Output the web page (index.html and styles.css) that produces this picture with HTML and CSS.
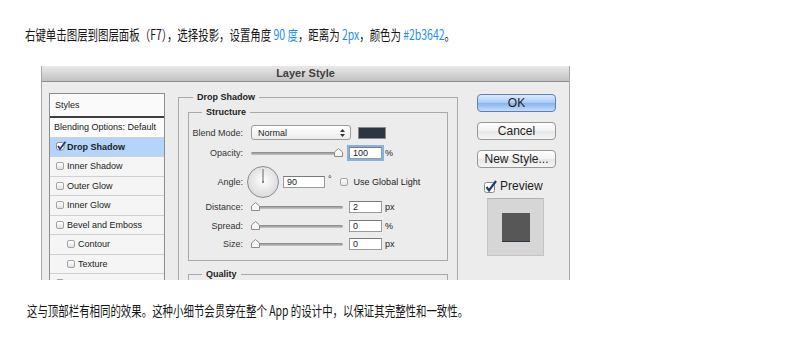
FILE: index.html
```html
<!DOCTYPE html>
<html lang="zh">
  <head>
    <meta charset="utf-8" />
    <title>Layer Style - 投影</title>
    <link rel="stylesheet" href="styles.css">
  </head>
  <body>
    <p class="note note-top">
      <span class="note-text">右键单击图层到图层面板（F7），选择投影，设置角度 <span class="hl">90 度</span>，距离为 <span class="hl">2px</span>，颜色为 <span class="hl">#2b3642</span>。</span>
    </p>

    <div class="dialog">
      <div class="titlebar">Layer Style</div>
      <div class="dialog-body">
        <div class="styles-list">
          <div class="styles-head">Styles</div>
          <div class="style-row">Blending Options: Default</div>
          <div class="style-row selected">
            <svg class="check" width="11" height="10" viewBox="0 0 11 10">
              <rect x="0.5" y="1.5" width="7.5" height="7.5" rx="2" fill="#fff" stroke="#8a8a8a" />
              <path d="M2 5 L4 8 L9.5 0.8" fill="none" stroke="#1d3c80" stroke-width="1.8" />
            </svg>
            <b>Drop Shadow</b>
          </div>
          <div class="style-row"><span class="cb"></span>Inner Shadow</div>
          <div class="style-row"><span class="cb"></span>Outer Glow</div>
          <div class="style-row"><span class="cb"></span>Inner Glow</div>
          <div class="style-row"><span class="cb"></span>Bevel and Emboss</div>
          <div class="style-row sub"><span class="cb"></span>Contour</div>
          <div class="style-row sub"><span class="cb"></span>Texture</div>
          <!-- next row (Satin) is cut off by the crop, only its checkbox shows -->
          <div class="style-row"><span class="cb"></span></div>
        </div>

        <div class="settings">
          <fieldset class="group effect">
            <legend>Drop Shadow</legend>
            <fieldset class="group structure">
              <legend>Structure</legend>

              <div class="field field-blend">
                <span class="field-label">Blend Mode:</span>
                <span class="select">
                  Normal
                  <svg width="5" height="8" viewBox="0 0 5 8"><path d="M2.5 0 L5 3 H0 Z M0 5 H5 L2.5 8 Z" fill="#333" /></svg>
                </span>
                <span class="swatch"></span>
              </div>

              <div class="field field-opacity">
                <span class="field-label">Opacity:</span>
                <span class="slider">
                  <svg class="thumb thumb-max" width="9" height="9" viewBox="0 0 9 9"><path d="M4.5 .5 L8.5 4 V8.5 H.5 V4 Z" fill="#f6f6f6" stroke="#8c8c8c" /></svg>
                </span>
                <span class="num focused">100</span>
                <span class="unit">%</span>
              </div>

              <div class="field field-angle">
                <span class="field-label">Angle:</span>
                <svg class="dial" width="32" height="32" viewBox="0 0 32 32">
                  <defs>
                    <radialGradient id="dialFill" cx="50%" cy="45%" r="60%">
                      <stop offset="0" stop-color="#ffffff" />
                      <stop offset="1" stop-color="#d6d6d6" />
                    </radialGradient>
                  </defs>
                  <circle cx="16" cy="16" r="15.5" fill="url(#dialFill)" stroke="#8d8d8d" />
                  <line x1="16" y1="16" x2="16" y2="3" stroke="#666" />
                  <circle cx="16" cy="16" r="1" fill="#666" />
                </svg>
                <span class="num num-wide">90</span>
                <span class="deg">°</span>
                <span class="cb cb-global"></span>
                <span>Use Global Light</span>
              </div>

              <div class="field field-distance">
                <span class="field-label">Distance:</span>
                <span class="slider">
                  <svg class="thumb" width="9" height="9" viewBox="0 0 9 9"><path d="M4.5 .5 L8.5 4 V8.5 H.5 V4 Z" fill="#f6f6f6" stroke="#8c8c8c" /></svg>
                </span>
                <span class="num">2</span>
                <span class="unit">px</span>
              </div>

              <div class="field field-spread">
                <span class="field-label">Spread:</span>
                <span class="slider">
                  <svg class="thumb" width="9" height="9" viewBox="0 0 9 9"><path d="M4.5 .5 L8.5 4 V8.5 H.5 V4 Z" fill="#f6f6f6" stroke="#8c8c8c" /></svg>
                </span>
                <span class="num">0</span>
                <span class="unit">%</span>
              </div>

              <div class="field field-size">
                <span class="field-label">Size:</span>
                <span class="slider">
                  <svg class="thumb" width="9" height="9" viewBox="0 0 9 9"><path d="M4.5 .5 L8.5 4 V8.5 H.5 V4 Z" fill="#f6f6f6" stroke="#8c8c8c" /></svg>
                </span>
                <span class="num">0</span>
                <span class="unit">px</span>
              </div>
            </fieldset>

            <fieldset class="group quality">
              <legend>Quality</legend>
            </fieldset>
          </fieldset>
        </div>

        <div class="actions">
          <button class="btn btn-ok">OK</button>
          <button class="btn">Cancel</button>
          <button class="btn">New Style...</button>
          <div class="preview-toggle">
            <svg width="14" height="13" viewBox="0 0 14 13">
              <rect x="0.5" y="2.5" width="10" height="10" rx="2" fill="#fff" stroke="#8a8a8a" />
              <path d="M2.5 7 L5 10.5 L12 1" fill="none" stroke="#1d3c80" stroke-width="2.2" />
            </svg>
            Preview
          </div>
          <div class="preview-box">
            <div class="preview-square"></div>
          </div>
        </div>
      </div>
    </div>

    <p class="note note-bottom">
      <span class="note-text">这与顶部栏有相同的效果。这种小细节会贯穿在整个 App 的设计中，以保证其完整性和一致性。</span>
    </p>
  </body>
</html>
```

FILE: styles.css
```css
body {
  margin: 0;
  background-color: #fff;
  color: #222;
  font-family: "Liberation Sans", Arial, sans-serif;
}

/* text above and below the screenshot */
.note {
  margin: 0;
  height: 20px;
  white-space: nowrap;
}

.note-text {
  display: inline-block;
  font-family: "Noto Sans CJK SC", sans-serif;
  font-size: 14px;
  line-height: 20px;
  color: #161616;
  transform: scaleX(0.745);
  transform-origin: 0 50%;
}

.note-top {
  padding: 24px 0 0 25px;
}

.note-bottom {
  padding: 20px 0 0 27px;
}

.hl {
  color: #1c8ef0;
}

/* dialog */
.dialog {
  margin: 22px 0 0 41px;
  width: 529px;
  height: 214px;
  box-sizing: border-box;
  border: 1px solid #a8a8a8;
  border-top: 0;
  border-bottom: 0;
  background-color: #ececec;
  overflow: hidden;
}

.titlebar {
  height: 15px;
  line-height: 15px;
  text-align: center;
  font-size: 11px;
  font-weight: bold;
  color: #404040;
  background: linear-gradient(#e9e9e9, #c2c2c2);
  border-bottom: 1px solid #8f8f8f;
}

.dialog-body {
  display: flex;
  align-items: flex-start;
  padding: 0 13px 0 7px;
  font-size: 9px;
}

/* styles list */
.styles-list {
  width: 116px;
  margin-top: 11px;
  box-sizing: border-box;
  border: 1px solid #8e8e8e;
  border-bottom: 0;
  background-color: #f5f5f5;
}

.styles-head {
  height: 22px;
  line-height: 22px;
  padding-left: 5px;
  background-color: #fafafa;
  border-bottom: 2px solid #3f3f3f;
}

.style-row {
  display: flex;
  align-items: center;
  height: 18.5px;
  padding-left: 6px;
  border-bottom: 1px solid #d0d0d0;
  white-space: nowrap;
}

.style-row:nth-child(2) {
  padding-left: 4px;
  background-color: #fbfbfb;
}

.style-row.sub {
  padding-left: 17px;
}

.style-row.selected {
  background-color: #b5d4fa;
}

.cb {
  display: inline-block;
  width: 8px;
  height: 8px;
  box-sizing: border-box;
  margin-right: 3px;
  border: 1px solid #a3a3a3;
  border-radius: 2px;
  background: linear-gradient(#fff, #e2e2e2);
}

.check {
  display: block;
  margin-top: -2px;
}

/* middle settings */
.settings {
  margin-left: 13px;
  margin-top: 10px;
}

.group {
  margin: 0;
  padding: 0;
  min-width: 0;
  border: 1px solid #a9a9a9;
}

.group legend {
  padding: 0 4px;
  font-size: 9px;
  line-height: 10px;
  font-weight: bold;
  color: #222;
}

.effect {
  width: 280px;
  height: 300px;
  box-sizing: border-box;
}

.effect > legend {
  margin-left: 14px;
}

.structure {
  margin: 5px 9px 0;
  padding: 8px 0 10px;
}

.structure > legend,
.quality > legend {
  margin-left: 13px;
}

.quality {
  margin: 8px 9px 0;
  height: 40px;
}

.field {
  display: flex;
  align-items: center;
  height: 12px;
  margin-bottom: 7px;
  white-space: nowrap;
}

.field-blend {
  height: 15px;
}

.field-angle {
  height: 32px;
  margin-bottom: 3px;
}

.field-spread {
  margin-bottom: 6px;
}

.field-size {
  margin-bottom: 0;
}

.field-label {
  width: 54px;
  margin-right: 8px;
  text-align: right;
  color: #333;
}

.select {
  display: flex;
  align-items: center;
  justify-content: space-between;
  width: 100px;
  height: 15px;
  box-sizing: border-box;
  padding: 0 5px 0 6px;
  border: 1px solid #9d9d9d;
  border-radius: 3px;
  background: linear-gradient(#fff, #ededed);
}

.swatch {
  width: 28px;
  height: 12px;
  margin-left: 7px;
  box-sizing: border-box;
  border: 1px solid #8a8a8a;
  background-color: #2b3642;
}

.slider {
  position: relative;
  width: 92px;
  height: 3px;
  border-radius: 2px;
  background: linear-gradient(#858585, #c9c9c9);
}

.thumb {
  position: absolute;
  top: -4px;
  left: 0;
}

.thumb.thumb-max {
  left: auto;
  right: 0;
}

.num {
  width: 33px;
  height: 12px;
  margin-left: 6px;
  box-sizing: border-box;
  padding-left: 3px;
  line-height: 10px;
  border: 1px solid #9b9b9b;
  border-top-color: #7b7b7b;
  background-color: #fff;
}

.num.focused {
  box-shadow: 0 0 0 2px #82b2ea;
}

.num-wide {
  width: 42px;
  margin-left: 4px;
}

.unit {
  margin-left: 3px;
}

.dial {
  margin-left: -4px;
}

.deg {
  margin-left: 3px;
  align-self: flex-start;
  margin-top: 8px;
}

.cb-global {
  margin-left: 8px;
  margin-right: 6px;
}

/* right column */
.actions {
  width: 79px;
  margin-left: 19px;
  margin-top: 12px;
}

.btn {
  display: block;
  width: 79px;
  height: 18px;
  margin: 0 0 10px;
  padding: 0;
  box-sizing: border-box;
  border: 1px solid #979797;
  border-radius: 4px;
  background: linear-gradient(#fff, #f3f3f3 50%, #e6e6e6 51%, #f6f6f6);
  font-family: "Liberation Sans", Arial, sans-serif;
  font-size: 12px;
  color: #1e1e1e;
}

.btn-ok {
  border-color: #5d80b6;
  background: linear-gradient(#dcebfd, #a7caf5 50%, #86b5ef 51%, #c3defb);
}

.preview-toggle {
  display: flex;
  align-items: center;
  height: 14px;
  margin: 11px 0 0 7px;
  font-size: 12px;
  color: #1e1e1e;
}

.preview-toggle svg {
  margin-right: 2px;
}

.preview-box {
  display: flex;
  align-items: center;
  justify-content: center;
  width: 57px;
  height: 58px;
  margin: 5px 0 0 10px;
  box-sizing: border-box;
  border: 1px solid #c4c4c4;
  border-top-color: #b0b0b0;
  background-color: #d6d6d6;
}

.preview-square {
  width: 28px;
  height: 28px;
  background-color: #575757;
  box-shadow: 0 1px 0 #2b3642;
}
```
